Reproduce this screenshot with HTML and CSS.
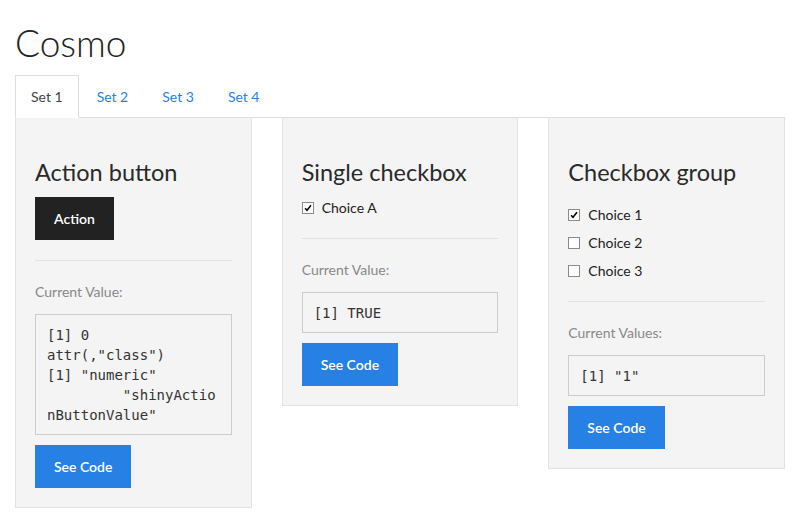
FILE: index.html
```html
<!DOCTYPE html>
<html>
<head>
<meta charset="utf-8">
<title>Cosmo</title>
<link rel="stylesheet" href="styles.css">
</head>
<body>
<div class="container">
  <h1 class="title">Cosmo</h1>
  <ul class="tabs">
    <li class="tab active"><a>Set 1</a></li>
    <li class="tab"><a>Set 2</a></li>
    <li class="tab"><a>Set 3</a></li>
    <li class="tab"><a>Set 4</a></li>
  </ul>
  <div class="row">
    <div class="col">
      <div class="well">
        <h3 class="well-title">Action button</h3>
        <button class="btn btn-dark">Action</button>
        <hr class="sep">
        <p class="muted">Current Value:</p>
        <pre class="out">[1] 0
attr(,"class")
[1] "numeric"
         "shinyActio
nButtonValue"</pre>
        <button class="btn btn-primary">See Code</button>
      </div>
    </div>
    <div class="col">
      <div class="well">
        <h3 class="well-title">Single checkbox</h3>
        <div class="checks">
          <label class="check"><span class="box"><svg viewBox="0 0 12 12" width="12" height="12"><path d="M2.5 6.2 L4.8 8.8 L9.6 2.8" fill="none" stroke="#000" stroke-width="1.8"/></svg></span><span>Choice A</span></label>
        </div>
        <hr class="sep">
        <p class="muted">Current Value:</p>
        <pre class="out">[1] TRUE</pre>
        <button class="btn btn-primary">See Code</button>
      </div>
    </div>
    <div class="col">
      <div class="well">
        <h3 class="well-title">Checkbox group</h3>
        <div class="checks group">
          <label class="check"><span class="box"><svg viewBox="0 0 12 12" width="12" height="12"><path d="M2.5 6.2 L4.8 8.8 L9.6 2.8" fill="none" stroke="#000" stroke-width="1.8"/></svg></span><span>Choice 1</span></label>
          <label class="check"><span class="box"></span><span>Choice 2</span></label>
          <label class="check"><span class="box"></span><span>Choice 3</span></label>
        </div>
        <hr class="sep">
        <p class="muted">Current Values:</p>
        <pre class="out">[1] "1"</pre>
        <button class="btn btn-primary">See Code</button>
      </div>
    </div>
  </div>
</div>
</body>
</html>
```
FILE: styles.css
```css
* { box-sizing: border-box; }
html, body { margin: 0; padding: 0; background: #fff; }
body {
  font-family: "Lato", "Liberation Sans", sans-serif;
  font-size: 14px;
  line-height: 21px;
  color: #222;
}
.container { padding: 0 15px; }
.title {
  margin: 20px 0 10px;
  font-size: 37px;
  line-height: 45px;
  font-weight: 300;
  color: #222;
}
.tabs {
  list-style: none;
  margin: 0;
  padding: 0;
  display: flex;
  border-bottom: 1px solid #dedede;
}
.tab { margin-right: 2px; margin-bottom: -1px; }
.tab a {
  display: block;
  padding: 10px 15px;
  border: 1px solid transparent;
  color: #2780e3;
  line-height: 21px;
}
.tab.active a {
  background: #fff;
  color: #444;
  border-color: #dedede #dedede transparent;
}
.row {
  display: grid;
  grid-template-columns: 1fr 1fr 1fr;
  column-gap: 30px;
  align-items: start;
}
.well {
  background: #f4f4f4;
  border: 1px solid #e3e3e3;
  border-top: 0;
  padding: 20px 19px 19px;
}
.well-title {
  margin: 20px 0 10px;
  font-size: 23.5px;
  line-height: 29px;
  font-weight: 400;
  color: #2a2a2a;
}
.btn {
  display: block;
  font-family: inherit;
  font-size: 14px;
  line-height: 21px;
  font-weight: 600;
  padding: 10px 18px;
  border: 1px solid transparent;
  color: #fff;
  cursor: pointer;
}
.btn-dark { background: #222; border-color: #222; }
.btn-primary { background: #2780e3; border-color: #2780e3; }
.sep {
  border: 0;
  border-top: 1px solid #e2e2e2;
  margin: 20px 0;
}
.muted { margin: 0 0 12px; color: #888; }
.out {
  margin: 0 0 10px;
  padding: 9.5px 11px;
  border: 1px solid #cccccc;
  background: #f4f4f4;
  font-family: "DejaVu Sans Mono", "Liberation Mono", monospace;
  font-size: 14px;
  line-height: 20px;
  color: #333;
}
.checks { display: flex; flex-direction: column; gap: 7px; margin-top: 10px; }
.checks.group { margin-top: 17px; }
.check { display: flex; align-items: center; gap: 8px; height: 21px; }
.box {
  width: 12px;
  height: 12px;
  border: 1px solid #8a8a8a;
  background: #fff;
  display: flex;
  align-items: center;
  justify-content: center;
}
.box svg { display: block; width: 10px; height: 10px; }
```
